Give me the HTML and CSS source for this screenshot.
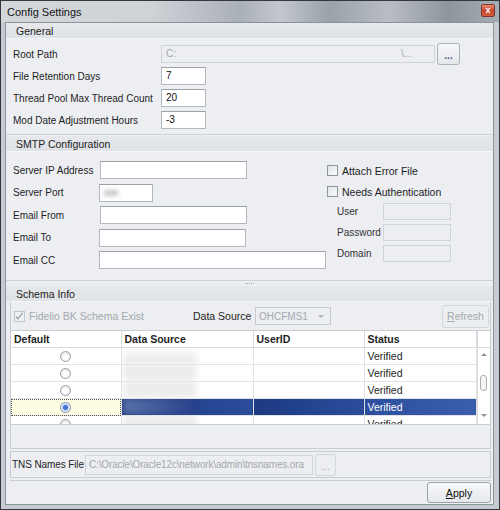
FILE: index.html
```html
<!DOCTYPE html>
<html>
<head>
<meta charset="utf-8">
<title>Config Settings</title>
<link rel="stylesheet" href="styles.css">
</head>
<body>
<div class="window">
  <div class="titlebar">
    <span class="title">Config Settings</span>
    <span class="close">x</span>
  </div>

  <div class="client">
    <!-- general settings -->
    <div class="group">
      <div class="group-head">General</div>
      <div class="group-body general-body">
        <div class="row">
          <span class="label wide">Root Path</span>
          <div class="textbox disabled path"><span>C:</span><span>\...</span></div>
          <div class="btn dots">...</div>
        </div>
        <div class="row">
          <span class="label wide">File Retention Days</span>
          <div class="textbox num">7</div>
        </div>
        <div class="row">
          <span class="label wide">Thread Pool Max Thread Count</span>
          <div class="textbox num">20</div>
        </div>
        <div class="row">
          <span class="label wide">Mod Date Adjustment Hours</span>
          <div class="textbox num">-3</div>
        </div>
      </div>
    </div>

    <!-- smtp -->
    <div class="group smtp">
      <div class="group-head">SMTP Configuration</div>
      <div class="group-body smtp-body">
        <div class="smtp-left">
          <div class="row tall"><span class="label mid">Server IP Address</span><div class="textbox w147"></div></div>
          <div class="row tall"><span class="label mid">Server Port</span><div class="textbox w54 shift"><span class="smudge"></span></div></div>
          <div class="row tall"><span class="label mid">Email From</span><div class="textbox w147"></div></div>
          <div class="row tall"><span class="label mid">Email To</span><div class="textbox w147 shift"></div></div>
          <div class="row tall"><span class="label mid">Email CC</span><div class="textbox w227 shift"></div></div>
        </div>
        <div class="smtp-right">
          <div class="check-row first"><span class="checkbox"></span>Attach Error File</div>
          <div class="check-row"><span class="checkbox"></span>Needs Authentication</div>
          <div class="auth-row"><span class="label auth">User</span><div class="textbox disabled w68"></div></div>
          <div class="auth-row"><span class="label auth">Password</span><div class="textbox disabled w68"></div></div>
          <div class="auth-row"><span class="label auth">Domain</span><div class="textbox disabled w68"></div></div>
        </div>
      </div>
    </div>

    <div class="splitter"><span></span></div>

    <!-- schema info -->
    <div class="group schema">
      <div class="group-head">Schema Info</div>
      <div class="schema-panel">
        <div class="toolbar">
          <div class="schema-check"><span class="checkbox checked"><svg width="11" height="11" viewBox="0 0 11 11"><path d="M2 5.5 L4.3 8.2 L9.5 1.5" fill="none" stroke="#a3a7ac" stroke-width="1.6"/></svg></span>Fidelio BK Schema Exist</div>
          <span class="ds-label">Data Source</span>
          <div class="combo">OHCFMS1<span class="arrow"></span></div>
          <div class="btn refresh"><u>R</u>efresh</div>
        </div>

        <div class="grid">
          <table class="grid-table">
            <colgroup><col class="c1"><col class="c2"><col class="c3"><col class="c4"></colgroup>
            <thead>
              <tr><th>Default</th><th>Data Source</th><th>UserID</th><th>Status</th></tr>
            </thead>
            <tbody>
              <tr><td class="radio-cell"><span class="radio"></span></td><td><span class="blur top"></span></td><td></td><td>Verified</td></tr>
              <tr><td class="radio-cell"><span class="radio"></span></td><td><span class="blur"></span></td><td></td><td>Verified</td></tr>
              <tr><td class="radio-cell"><span class="radio"></span></td><td><span class="blur"></span></td><td></td><td>Verified</td></tr>
              <tr class="selected"><td class="radio-cell focus"><span class="radio on"></span></td><td><span class="blur dark"></span></td><td></td><td>Verified</td></tr>
              <tr><td class="radio-cell"><span class="radio"></span></td><td><span class="blur"></span></td><td><span class="blur small"></span></td><td>Verified</td></tr>
            </tbody>
          </table>
          <div class="vscroll">
            <div class="vscroll-head"></div>
            <div class="vscroll-track">
              <span class="up"></span>
              <span class="thumb"></span>
              <span class="down"></span>
            </div>
          </div>
        </div>
        <div class="grid-foot"></div>
      </div>
    </div>

    <div class="tns">
      <span class="tns-label">TNS Names File</span>
      <div class="textbox disabled tns-path">C:\Oracle\Oracle12c\network\admin\tnsnames.ora</div>
      <div class="btn dots small">...</div>
    </div>

    <div class="footer">
      <div class="btn apply"><u>A</u>pply</div>
    </div>
  </div>
</div>
</body>
</html>
```

FILE: styles.css
```css
body {
    margin: 0;
    font-family: "Liberation Sans", Arial, sans-serif;
    font-size: 10px;
    color: #1e1e1e;
}

.window {
    width: 500px;
    height: 510px;
    box-sizing: border-box;
    border: 1px solid #34383d;
    background: #c6cbd1;
    display: flex;
    flex-direction: column;
}

/* title bar */
.titlebar {
    height: 21px;
    display: flex;
    align-items: center;
    justify-content: space-between;
    padding: 0 4px 0 6px;
    background: linear-gradient(to right, #d3d7dc 0%, #cfd3d8 30%, #aab0b7 48%, #c2c7cd 56%, #9ba2aa 66%, #b8bdc3 78%, #8e959d 90%, #a7adb4 100%);
}

.title {
    font-size: 11px;
    color: #141414;
    margin-top: 1px;
}

.close {
    width: 14px;
    height: 13px;
    margin-top: -2px;
    border: 1px solid #7a3a2c;
    border-radius: 2px;
    box-sizing: border-box;
    background: linear-gradient(#e98a70, #c9452a 55%, #d4603f);
    color: #fff;
    font-size: 9px;
    font-weight: bold;
    line-height: 11px;
    text-align: center;
}

.client {
    flex: 1;
    margin: 0 5px 4px 4px;
    border: 1px solid #8d939b;
    background: #eceef2;
    display: flex;
    flex-direction: column;
}

/* group boxes */
.group {
    border-bottom: 1px solid #cdd1d6;
}

.group-head {
    height: 16px;
    line-height: 16px;
    padding-left: 10px;
    font-size: 10.5px;
    color: #222;
    background: linear-gradient(#e6e8eb, #dfe2e6);
    border-bottom: 1px solid #f4f5f7;
    box-sizing: border-box;
}

.general-body {
    height: 95px;
    box-sizing: border-box;
    padding: 4px 0 0 7px;
}

.row {
    height: 22px;
    display: flex;
    align-items: center;
}

.row.tall {
    height: 22.5px;
}

.label.wide {
    width: 148px;
}

.label.mid {
    width: 87px;
}

/* text boxes */
.textbox {
    height: 18px;
    box-sizing: border-box;
    border: 1px solid #b4b8be;
    border-top-color: #9da2a8;
    background: #fff;
    padding: 0 4px;
    line-height: 16px;
    display: flex;
    align-items: center;
    color: #111;
}

.textbox.disabled {
    background: #eceef1;
    border-color: #d0d3d8;
    color: #a4a8ad;
}

.textbox.path {
    width: 274px;
    justify-content: space-between;
    padding-right: 22px;
}

.textbox.num {
    width: 45px;
}

.textbox.w147 { width: 147px; }
.textbox.w54 { width: 54px; }
.textbox.w227 { width: 227px; }
.textbox.w68 { width: 68px; height: 17px; }
.textbox.shift { margin-left: -1px; }

.smudge {
    width: 14px;
    height: 6px;
    background: #c9c9c9;
    filter: blur(2px);
}

.btn {
    box-sizing: border-box;
    border: 1px solid #adb2b8;
    border-radius: 3px;
    background: linear-gradient(#f7f8fa, #e4e7eb);
    display: flex;
    align-items: center;
    justify-content: center;
    color: #333;
}

.btn.dots {
    width: 23px;
    height: 22px;
    margin-left: 2px;
    color: #4a5a80;
    font-weight: bold;
    padding-top: 3px;
}

/* smtp */
.smtp {
    margin-top: 1px;
}

.smtp-body {
    height: 128px;
    display: flex;
}

.smtp-left {
    width: 314px;
    padding: 7px 0 0 7px;
}

.smtp-right {
    padding-top: 7px;
}

.check-row {
    height: 19px;
    display: flex;
    align-items: center;
    font-size: 10.5px;
}

.check-row.first {
    height: 23px;
}

.checkbox {
    width: 11px;
    height: 11px;
    box-sizing: border-box;
    border: 1px solid #8e949b;
    background: linear-gradient(135deg, #e2e4e7, #fbfbfc);
    margin-right: 4px;
    display: flex;
}

.auth-row {
    height: 21px;
    display: flex;
    align-items: center;
    padding-left: 10px;
}

.label.auth {
    width: 46px;
    color: #333;
}

.splitter {
    height: 5px;
    display: flex;
    justify-content: center;
    align-items: center;
}

.splitter span {
    width: 9px;
    height: 1px;
    background: repeating-linear-gradient(to right, #9ea3a9 0 1px, transparent 1px 2px);
}

/* schema info */
.schema {
    border-bottom: none;
}

.schema-panel {
    margin: 0 2px 0 4px;
    border: 1px solid #c9cdd2;
    border-top: none;
}

.toolbar {
    height: 28px;
    display: flex;
    align-items: center;
    padding-left: 3px;
}

.schema-check {
    width: 179px;
    display: flex;
    align-items: center;
    color: #a5a9ae;
    font-size: 10.5px;
}

.checkbox.checked {
    border-color: #c2c6cb;
    background: #eef0f2;
}

.checkbox.checked svg {
    margin: -1px 0 0 -1px;
}

.ds-label {
    width: 62px;
    font-size: 10.5px;
}

.combo {
    width: 76px;
    height: 18px;
    box-sizing: border-box;
    border: 1px solid #c6cacf;
    color: #a5a9ae;
    padding-left: 3px;
    display: flex;
    align-items: center;
}

.combo .arrow {
    margin-left: auto;
    margin-right: 6px;
    border: 3px solid transparent;
    border-top: 3px solid #b2b6bb;
    margin-top: 3px;
}

.btn.refresh {
    margin-left: auto;
    margin-right: 1px;
    width: 47px;
    height: 23px;
    color: #a5a9ae;
    border-color: #d3d6da;
    background: #eceef1;
    font-size: 10.5px;
}

/* grid */
.grid {
    height: 95px;
    display: flex;
    overflow: hidden;
    background: #fff;
    border-top: 1px solid #c9cdd2;
    border-bottom: 1px solid #c9cdd2;
    box-sizing: border-box;
}

.grid-table {
    width: 465px;
    border-collapse: collapse;
    table-layout: fixed;
    font-size: 10.5px;
}

.grid-table .c1 { width: 110px; }
.grid-table .c2 { width: 132px; }
.grid-table .c3 { width: 111px; }
.grid-table .c4 { width: 112px; }

.grid-table th {
    height: 16px;
    text-align: left;
    padding: 0 3px;
    font-weight: bold;
    border-right: 1px solid #d8dadd;
    border-bottom: 1px solid #d8dadd;
}

.grid-table td {
    height: 15.5px;
    padding: 0 3px;
    border-right: 1px solid #e2e3e5;
    border-bottom: 1px solid #e2e3e5;
    white-space: nowrap;
    overflow: hidden;
}

.radio-cell {
    text-align: center;
    line-height: 0;
}

.radio {
    display: inline-block;
    width: 11px;
    height: 11px;
    box-sizing: border-box;
    border-radius: 50%;
    border: 1px solid #9a9fa5;
    background: radial-gradient(circle at 50% 60%, #fefefe 30%, #d6d9dd 100%);
}

.radio.on {
    background: radial-gradient(circle, #3f73d6 0 30%, #9ab7ea 42%, #eef2f8 60%);
    border-color: #7d8fb0;
}

.radio-cell.focus {
    background: #fdfde1;
    outline: 1px dotted #555;
    outline-offset: -1px;
}

.selected td {
    background: linear-gradient(to right, #1d3a82, #2a4d9b);
    color: #fff;
}

.selected td:last-child {
    background: linear-gradient(to right, #2c4f9d, #3a5eac);
}

.selected td.radio-cell {
    background: #fdfde1;
}

.blur {
    display: block;
    width: 74px;
    height: 17px;
    margin: -1px 0 0 -2px;
    background: #ececec;
    filter: blur(3px);
}

.blur.top {
    background: linear-gradient(#fff, #e3e3e3);
}

.blur.dark {
    background: linear-gradient(to right, #5a72a8, #27408a);
}

.blur.small {
    width: 30px;
    height: 3px;
    margin: 11px 0 0 3px;
    background: #777;
    filter: blur(1px);
}

.vscroll {
    width: 14px;
    border-left: 1px solid #d8dadd;
    display: flex;
    flex-direction: column;
}

.vscroll-head {
    height: 17px;
    border-bottom: 1px solid #d8dadd;
    box-sizing: border-box;
}

.vscroll-track {
    flex: 1;
    display: flex;
    flex-direction: column;
    align-items: center;
    padding-top: 5px;
}

.vscroll-track .up {
    border: 3px solid transparent;
    border-bottom: 3px solid #8e9399;
    border-top: none;
}

.vscroll-track .thumb {
    width: 5px;
    height: 14px;
    margin-top: 19px;
    border: 1px solid #a9adb2;
    border-radius: 3px;
    background: #f4f4f5;
}

.vscroll-track .down {
    margin-top: 23px;
    border: 3px solid transparent;
    border-top: 3px solid #8e9399;
    border-bottom: none;
}

.grid-foot {
    height: 23px;
}

/* tns */
.tns {
    margin: 2px 2px 0 4px;
    height: 27px;
    box-sizing: border-box;
    border: 1px solid #c9cdd2;
    display: flex;
    align-items: center;
    padding-left: 1px;
}

.tns-label {
    width: 73px;
    white-space: nowrap;
    font-size: 10px;
    letter-spacing: -0.1px;
    color: #222;
}

.textbox.tns-path {
    width: 228px;
    height: 20px;
    padding: 0 3px;
    white-space: nowrap;
    overflow: hidden;
    font-size: 10px;
    letter-spacing: -0.15px;
}

.btn.dots.small {
    width: 21px;
    height: 22px;
    color: #a5a9ae;
    font-weight: normal;
    background: #eceef1;
    border-color: #d3d6da;
}

.footer {
    flex: 1;
    margin: 2px 2px 0 4px;
    border-top: 1px solid #c9cdd2;
    display: flex;
    justify-content: flex-end;
    padding-top: 1px;
}

.btn.apply {
    width: 64px;
    height: 21px;
    font-size: 10.5px;
    color: #111;
    border-color: #9fa4aa;
}
```
